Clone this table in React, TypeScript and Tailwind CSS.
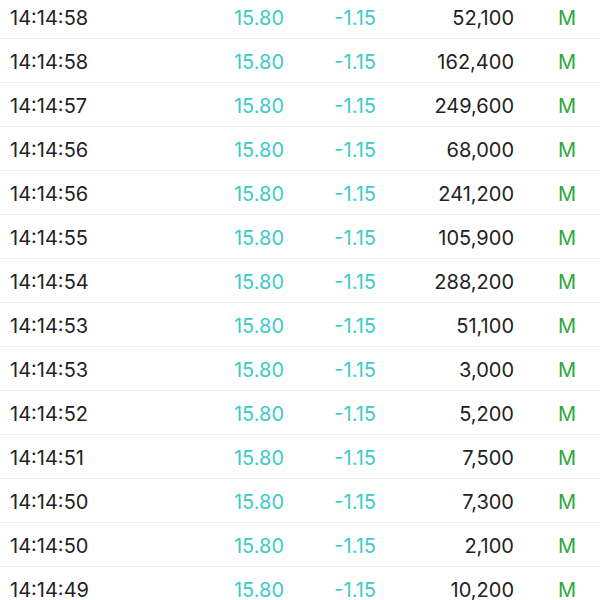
const trades = [
  { time: "14:14:58", volume: "52,100" },
  { time: "14:14:58", volume: "162,400" },
  { time: "14:14:57", volume: "249,600" },
  { time: "14:14:56", volume: "68,000" },
  { time: "14:14:56", volume: "241,200" },
  { time: "14:14:55", volume: "105,900" },
  { time: "14:14:54", volume: "288,200" },
  { time: "14:14:53", volume: "51,100" },
  { time: "14:14:53", volume: "3,000" },
  { time: "14:14:52", volume: "5,200" },
  { time: "14:14:51", volume: "7,500" },
  { time: "14:14:50", volume: "7,300" },
  { time: "14:14:50", volume: "2,100" },
  { time: "14:14:49", volume: "10,200" },
]

export default function App() {
  return (
    <div className="h-[600px] w-[600px] overflow-hidden bg-white font-['Inter','Noto_Sans',sans-serif] text-[20px]">
      <div className="-mt-[5px]">
        {trades.map((t, i) => (
          <div key={i} className="flex h-[44px] items-center border-b border-[#f0f0f0] pt-[3px]">
            <div className="w-[200px] pl-[10px] text-[#222]">{t.time}</div>
            <div className="w-[84px] text-right text-[#3ccbc8]">15.80</div>
            <div className="w-[92px] text-right text-[#3ccbc8]">-1.15</div>
            <div className="w-[138px] text-right text-[#222]">{t.volume}</div>
            <div className="pl-[44px] text-[#2aa83a]">M</div>
          </div>
        ))}
      </div>
    </div>
  )
}
